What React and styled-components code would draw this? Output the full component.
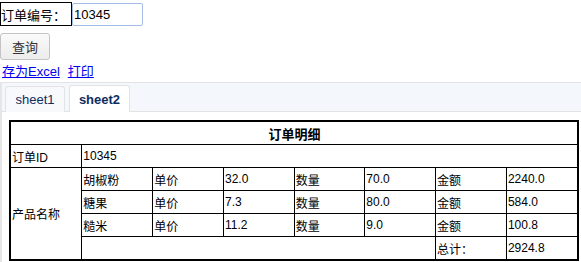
import React from 'react';
import styled, { createGlobalStyle, css } from 'styled-components';

const GlobalStyle = createGlobalStyle`
    html, body {
        margin: 0;
        padding: 0;
        background: #fff;
        font-family: "Liberation Sans", "Noto Sans CJK SC", sans-serif;
        font-size: 13px;
    }
`;

const Page = styled.div`
    display: flex;
    flex-direction: column;
    align-items: flex-start;
    padding-top: 2px;
`;

const SearchRow = styled.div`
    display: flex;
    align-items: flex-start;
`;

const Label = styled.span`
    display: flex;
    align-items: center;
    box-sizing: border-box;
    width: 72px;
    height: 24px;
    border: 1px solid #000;
    font-size: 13px;
    color: #000;
`;

const Input = styled.input`
    box-sizing: border-box;
    width: 71px;
    height: 23px;
    margin-top: 1px;
    padding: 0 1px;
    border: 1px solid #a4bde6;
    border-radius: 2px;
    font-family: inherit;
    font-size: 13px;
    color: #000;
    outline: none;
`;

const Button = styled.button`
    box-sizing: border-box;
    width: 50px;
    height: 27px;
    margin-top: 7px;
    border: 1px solid #c4c4c4;
    border-radius: 3px;
    background: linear-gradient(#fafafa, #ececec);
    font-family: inherit;
    font-size: 13px;
    color: #333;
    padding: 0;
`;

const LinkRow = styled.div`
    display: flex;
    gap: 8px;
    padding-left: 2px;
    margin-top: 4px;
    line-height: 16px;
    a {
        color: #0000ee;
        font-size: 13px;
    }
`;

const Panel = styled.div`
    align-self: stretch;
    margin-top: 2px;
    border-left: 2px solid #e6e6e6;
    height: 180px;
`;

const TabBar = styled.div`
    display: flex;
    align-items: flex-end;
    gap: 4px;
    height: 28px;
    padding-left: 3px;
    background: #f4f7fb;
    border-top: 1px solid #e3e3e3;
    border-bottom: 1px solid #e3e3e3;
`;

const Tab = styled.div`
    box-sizing: border-box;
    display: flex;
    align-items: center;
    justify-content: center;
    width: 60px;
    height: 26px;
    margin-bottom: -1px;
    border: 1px solid #e3e3e3;
    border-bottom: none;
    border-radius: 3px 3px 0 0;
    background: #f8f9fb;
    color: #0e2d5f;
    font-size: 13px;
    ${props => props.active && css`
        width: 61px;
        background: #fff;
        font-weight: bold;
        height: 27px;
    `}
`;

const Content = styled.div`
    padding: 8px 3px 0 7px;
`;

const Table = styled.table`
    width: 570px;
    border-collapse: collapse;
    border: 2px solid #000;
    font-size: 12px;
    td {
        border: 1px solid #000;
        height: 22px;
        padding: 0 0 0 1px;
        width: 70px;
        white-space: nowrap;
    }
`;

const TitleCell = styled.td`
    text-align: center;
    font-weight: bold;
    font-size: 13px;
`;

const products = [
    { name: '胡椒粉', price: '32.0', qty: '70.0', amount: '2240.0' },
    { name: '糖果', price: '7.3', qty: '80.0', amount: '584.0' },
    { name: '糙米', price: '11.2', qty: '9.0', amount: '100.8' },
];

export default function App() {
    return (
        <Page>
            <GlobalStyle />
            <SearchRow>
                <Label>订单编号：</Label>
                <Input defaultValue="10345" />
            </SearchRow>
            <Button>查询</Button>
            <LinkRow>
                <a href="#">存为Excel</a>
                <a href="#">打印</a>
            </LinkRow>
            <Panel>
                <TabBar>
                    <Tab>sheet1</Tab>
                    <Tab active>sheet2</Tab>
                </TabBar>
                <Content>
                    <Table>
                        <tbody>
                            <tr>
                                <TitleCell colSpan={8}>订单明细</TitleCell>
                            </tr>
                            <tr>
                                <td>订单ID</td>
                                <td colSpan={7}>10345</td>
                            </tr>
                            {products.map((p, i) => (
                                <tr key={p.name}>
                                    {i === 0 && <td rowSpan={4}>产品名称</td>}
                                    <td>{p.name}</td>
                                    <td>单价</td>
                                    <td>{p.price}</td>
                                    <td>数量</td>
                                    <td>{p.qty}</td>
                                    <td>金额</td>
                                    <td>{p.amount}</td>
                                </tr>
                            ))}
                            <tr>
                                <td colSpan={5}></td>
                                <td>总计：</td>
                                <td>2924.8</td>
                            </tr>
                        </tbody>
                    </Table>
                </Content>
            </Panel>
        </Page>
    );
}
